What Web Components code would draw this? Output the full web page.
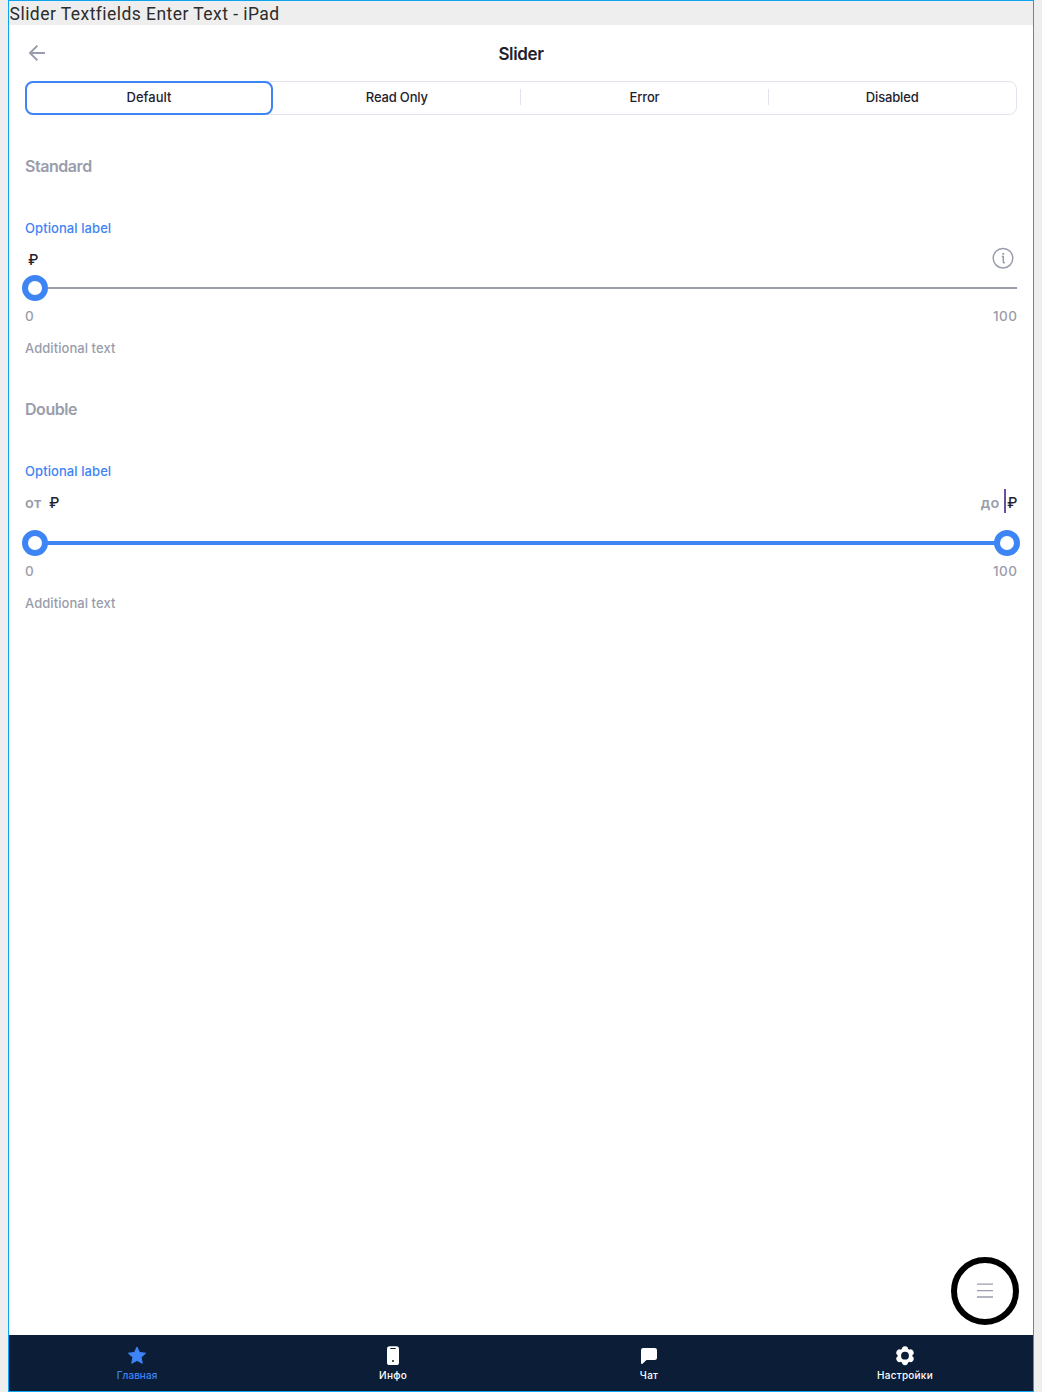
<!DOCTYPE html>
<html lang="ru">
<head>
<meta charset="utf-8">
<title>Slider</title>
<style>
html,body{margin:0;height:100%;background:#eee}
body{font-family:Inter,"Liberation Sans",sans-serif;color:#1f222e;overflow:hidden}
</style>
</head>
<body>
<app-frame></app-frame>
<script>
const define = (name, html) => customElements.define(name, class extends HTMLElement {
  connectedCallback() {
    if (this.shadowRoot) return;
    const t = document.createElement('template');
    t.innerHTML = typeof html === 'function' ? html(this) : html;
    this.attachShadow({mode: 'open'}).append(t.content.cloneNode(true));
  }
});

define('frame-caption', `<style>
:host{display:block;box-sizing:border-box;height:24px;padding-left:.6px;background:#eee;color:#2c2c2c;font:370 17.500px/26px Roboto,sans-serif;letter-spacing:.45px;white-space:nowrap}
</style><slot></slot>`);

define('page-header', `<style>
:host{display:grid;grid-template-columns:24px 1fr 24px;align-items:center;height:56px;padding:0 16px}
svg{display:block}
h1{margin:0;text-align:center;font-size:17px;line-height:24px;font-weight:600;letter-spacing:-.36px;padding-top:2px}
</style><svg width="24" height="24" viewBox="0 0 24 24" fill="none" stroke="#999dab" stroke-width="2"><path d="M20 12H5.2M12.400 4.600 5 12l7.400 7.400"/></svg><h1><slot></slot></h1>`);

define('segment-item', `<style>
:host{display:flex;flex:1;align-items:center;justify-content:center;position:relative;box-sizing:border-box;font-size:13px;line-height:18px;letter-spacing:-.17px;font-weight:450;padding-bottom:2px}
:host([divided])::before{content:"";position:absolute;left:-.5px;top:7px;width:1px;height:16px;background:#e1e4ee}
:host([selected]){flex:0 0 248px;font-weight:550;letter-spacing:0;margin:-1px 0 -1px -1px;border:2px solid #3d84f5;border-radius:8px;background:#fff}
</style><slot></slot>`);
define('segment-control', `<style>
:host{display:flex;box-sizing:border-box;height:34px;margin:0 16px;border:1px solid #e1e4ee;border-radius:8px}
</style><slot></slot>`);

define('section-title', `<style>
:host{display:block;height:24px;color:#999dab;font-size:16px;line-height:24px;font-weight:600;letter-spacing:-.45px}
</style><slot></slot>`);

define('slider-thumb', `<style>
:host{display:block;box-sizing:border-box;width:26px;height:26px;border:6px solid #3d84f5;border-radius:50%;background:#fff}
</style>`);

define('slider-track', el => `<style>
:host{display:flex;align-items:center;height:26px;margin:0 -3px}
i{flex:1;height:2px;background:#999dab;margin-right:3px}
:host([double]) i{height:4px;background:#3d84f5;margin:0 -1px}
</style><slider-thumb></slider-thumb><i></i>${el.hasAttribute('double') ? '<slider-thumb></slider-thumb>' : ''}`);

define('slider-field', el => `<style>
:host{display:block;color:#999dab;font-size:13px;line-height:18px}
.label{color:#3d84f5;font-weight:500;height:18px;letter-spacing:.08px}
.row{display:flex;justify-content:space-between;align-items:center;height:24px}
.range{display:flex;justify-content:space-between;height:18px;margin-top:6px;font-size:13.500px;font-weight:500;letter-spacing:.5px}
.range span:last-child{margin-right:-.5px}
.note{height:18px;margin-top:14px;font-weight:450;letter-spacing:.06px}
</style><div class="label">Optional label</div>
<div class="row" style="margin-top:${el.getAttribute('gap')}px"><slot name="start"></slot><slot name="end"></slot></div>
<slider-track style="margin-top:${el.hasAttribute('double') ? 16 : 4}px" ${el.hasAttribute('double') ? 'double' : ''}></slider-track>
<div class="range"><span>0</span><span>100</span></div>
<div class="note">Additional text</div>`);

define('money-value', el => `<style>
:host{display:flex;align-items:center;height:24px;font-size:14.500px;line-height:24px}
.prefix{color:#999dab;font-size:14.500px;font-weight:600;letter-spacing:.2px;padding-top:2px;margin-right:7.500px}
.caret{width:2px;height:24px;background:#6750a4;margin:-3px 1px 0 -3px}
.unit{color:#1f222e;font-weight:500;width:10px;padding-top:1px}
</style>${el.hasAttribute('prefix') ? `<span class="prefix">${el.getAttribute('prefix')}</span>` : ''}${el.hasAttribute('caret') ? '<span class="caret"></span>' : ''}<span class="unit">₽</span>`);

define('info-icon', `<style>:host{display:block;margin:-2px 2px 0 0}svg{display:block}</style>
<svg width="24" height="24" viewBox="0 0 24 24" fill="none" stroke="#999dab" stroke-width="1.500"><circle cx="12" cy="12.200" r="9.800"/><path d="M10.800 10.500h1.500v5.200c0 .9.4 1.200 1.600 1.100"/><path d="M12.200 7v1.800" stroke-width="1.800"/></svg>`);

define('menu-button', `<style>
:host{display:flex;align-items:center;justify-content:center;box-sizing:border-box;width:68px;height:68px;border:6px solid #000;border-radius:50%;background:#fff;margin:auto 14px 10px auto}
</style><svg width="16" height="16" viewBox="0 0 16 16" fill="none" stroke="#999dab" stroke-width="1.300"><path d="M0 1.200h16M0 7.700h16M0 14h16"/></svg>`);

define('tab-item', `<style>
:host{display:flex;flex:1;flex-direction:column;align-items:center;color:#fff;font-size:10px;line-height:12px;font-weight:500;letter-spacing:.25px;padding-top:9px}
:host([active]){color:#3d84f5;font-weight:450;letter-spacing:.05px}
slot[name=icon]{display:block;height:24px}
span{margin-top:1px}
</style><slot name="icon"></slot><span><slot></slot></span>`);
define('tab-bar', `<style>:host{display:flex;height:56px;background:#0b1d37}</style><slot></slot>`);

const petals = [0, 60, 120, 180, 240, 300].map(a => `<circle cx="12" cy="5.300" r="3.100" transform="rotate(${a} 12 11.700)"/>`).join('');

define('app-frame', `<style>
:host{display:flex;flex-direction:column;box-sizing:border-box;width:1026px;height:1392px;margin:0 8px;border:1px solid #0ea5f0;background:#fff}
main{display:flex;flex-direction:column;padding:39px 16px 0}
svg{display:block}
</style>
<frame-caption>Slider Textfields Enter Text - iPad</frame-caption>
<page-header>Slider</page-header>
<segment-control>
<segment-item selected>Default</segment-item><segment-item>Read Only</segment-item><segment-item divided>Error</segment-item><segment-item divided>Disabled</segment-item>
</segment-control>
<main>
<section-title>Standard</section-title>
<slider-field gap="10" style="margin-top:41px"><money-value slot="start" style="margin-left:3px"></money-value><info-icon slot="end"></info-icon></slider-field>
<section-title style="margin-top:40px">Double</section-title>
<slider-field double gap="10" style="margin-top:41px"><money-value slot="start" prefix="от"></money-value><money-value slot="end" prefix="до" caret></money-value></slider-field>
</main>
<menu-button></menu-button>
<tab-bar>
<tab-item active><svg slot="icon" width="24" height="24" viewBox="0 0 24 24"><path fill="#3d84f5" stroke="#3d84f5" stroke-linejoin="round" d="m12 3 2.500 5.500 6.100.7-4.500 4.100 1.200 6-5.300-2.900-5.300 2.900 1.200-6-4.500-4.100 6.100-.7z"/></svg>Главная</tab-item>
<tab-item><svg slot="icon" width="24" height="24" viewBox="0 0 24 24"><rect x="6" y="2.200" width="12" height="18.800" rx="2.600" fill="#fff"/><path stroke="#0b1d37" stroke-linecap="round" d="M9.700 4.500h4.600"/><circle cx="12" cy="17" r="1" fill="#0b1d37"/></svg>Инфо</tab-item>
<tab-item><svg slot="icon" width="24" height="24" viewBox="0 0 24 24"><path fill="#fff" d="M6.200 4h11.600A2.200 2.200 0 0 1 20 6.200v7.600a2.200 2.200 0 0 1-2.200 2.200H9.500l-4 3.700c-.6.4-1.500.3-1.500-.7V6.200A2.200 2.200 0 0 1 6.200 4z"/></svg>Чат</tab-item>
<tab-item><svg slot="icon" width="24" height="24" viewBox="0 0 24 24"><g fill="#fff">${petals}<circle cx="12" cy="11.700" r="7.400"/></g><circle cx="12" cy="11.700" r="3.900" fill="#0b1d37"/></svg>Настройки</tab-item>
</tab-bar>`);
</script>
</body>
</html>
